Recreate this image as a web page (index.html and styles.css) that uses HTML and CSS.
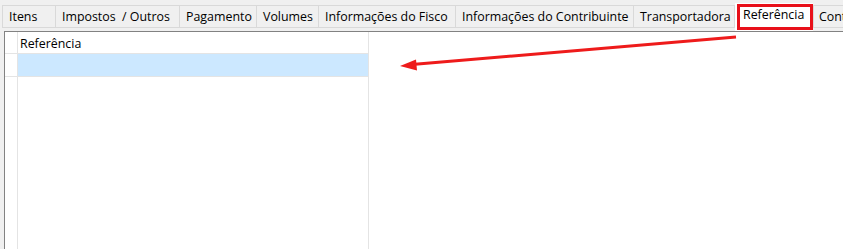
FILE: index.html
```html
<!DOCTYPE html>
<html lang="pt-BR">
<head>
    <meta charset="UTF-8">
    <title>Referência</title>
    <link rel="stylesheet" href="styles.css">
</head>
<body>
<div class="tabs">
    <div class="tab tab-itens">Itens</div>
    <div class="tab tab-impostos">Impostos &nbsp;/ Outros</div>
    <div class="tab tab-pagamento">Pagamento</div>
    <div class="tab tab-volumes">Volumes</div>
    <div class="tab tab-fisco">Informações do Fisco</div>
    <div class="tab tab-contrib">Informações do Contribuinte</div>
    <div class="tab tab-transp">Transportadora</div>
    <div class="tab tab-ref selected">Referência<span class="mark-box"></span></div>
    <div class="tab tab-cont">Contratos</div>
</div>
<div class="panel">
    <div class="grid">
        <div class="cell ind"></div>
        <div class="cell head">Referência</div>
        <div class="cell ind"></div>
        <div class="cell row-sel"></div>
        <div class="cell ind filler"></div>
        <div class="cell filler"></div>
    </div>
</div>
<svg class="arrow" width="843" height="249" viewBox="0 0 843 249">
    <line x1="736" y1="37" x2="412" y2="64.5" stroke="#ee1b1b" stroke-width="3"/>
    <polygon points="400,66 416,59.5 417,70.5" fill="#ee1b1b"/>
</svg>
</body>
</html>
```
FILE: styles.css
```css
body {
    margin: 0;
    background-color: #f0f0f0;
    font-family: "Open Sans", "Noto Sans", sans-serif;
    font-size: 12.4px;
    color: #000;
    overflow: hidden;
    height: 249px;
    position: relative;
}

.tabs {
    display: flex;
    align-items: flex-start;
    height: 28px;
    margin-top: 3px;
    padding-left: 2px;
    white-space: nowrap;
    overflow: hidden;
}

.tab {
    box-sizing: border-box;
    flex: none;
    height: 23px;
    margin-top: 2px;
    margin-left: -1px;
    border: 1px solid #d9d9d9;
    background-color: #f0f0f0;
    line-height: 21px;
    padding-left: 6px;
}

.tab-itens { width: 54px; margin-left: 0; }
.tab-impostos { width: 125px; }
.tab-pagamento { width: 78px; }
.tab-volumes { width: 63px; }
.tab-fisco { width: 138px; }
.tab-contrib { width: 179px; }
.tab-transp { width: 102px; }
.tab-ref { width: 78px; }
.tab-cont { width: 60px; margin-left: 0; padding-left: 5px; }

.selected {
    position: relative;
    height: 28px;
    margin-top: 0;
    margin-left: 0;
    border: none;
    background-color: #fff;
    line-height: 24px;
    padding-left: 8px;
}

.mark-box {
    position: absolute;
    left: 2px;
    top: 1px;
    width: 76px;
    height: 26px;
    box-sizing: border-box;
    border: 3px solid #e8101a;
}

.panel {
    height: 218px;
    margin-left: 4px;
    border-top: 1px solid #828282;
    border-left: 1px solid #828282;
    background-color: #fff;
}

.grid {
    display: grid;
    grid-template-columns: 13px 351px;
    grid-template-rows: 22px 23px 1fr;
    height: 100%;
}

.cell {
    box-sizing: border-box;
    border-right: 1px solid #e4e4e4;
    border-bottom: 1px solid #e4e4e4;
}

.head {
    padding-left: 2px;
    padding-top: 1px;
    line-height: 21px;
}

.row-sel {
    background-color: #cce8ff;
}

.filler {
    border-bottom: none;
}

.arrow {
    position: absolute;
    left: 0;
    top: 0;
    pointer-events: none;
}
```
